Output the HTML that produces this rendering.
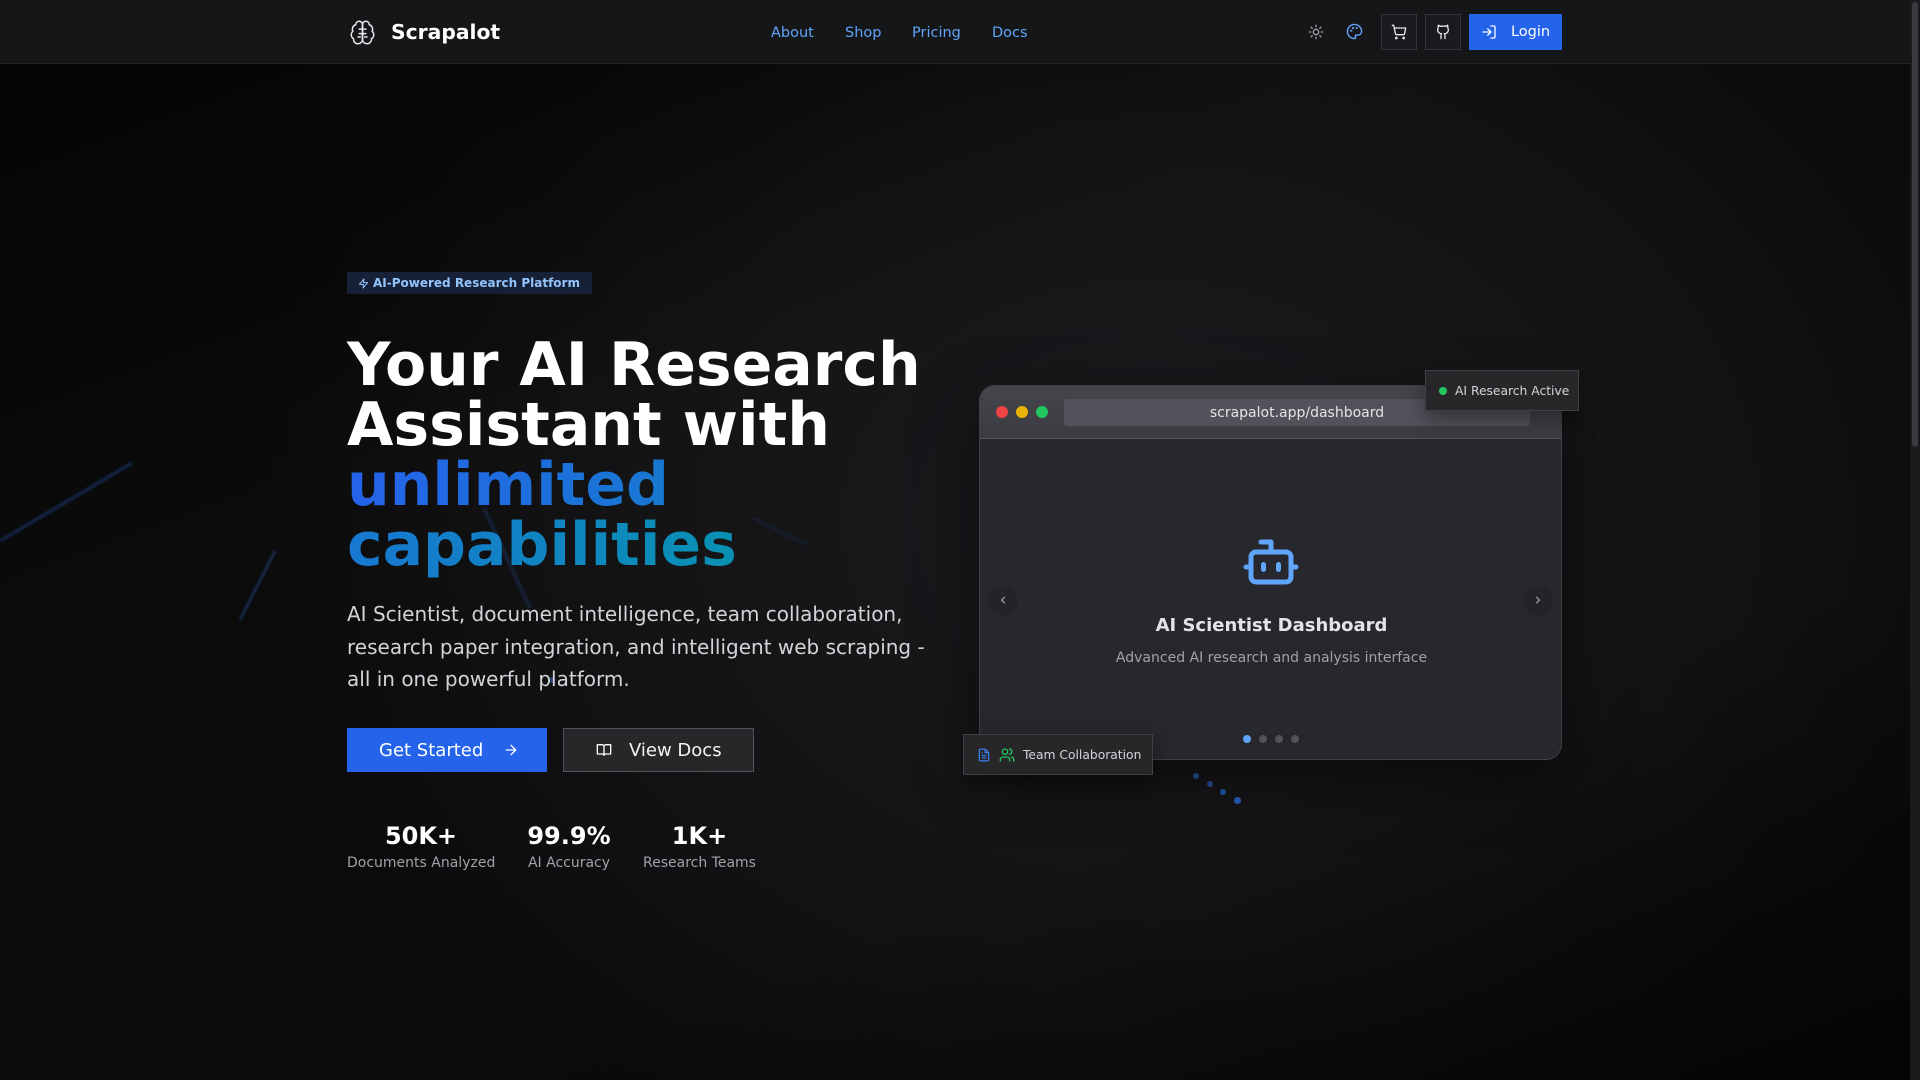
<!DOCTYPE html>
<html><head><meta charset="utf-8">
<style>
*{margin:0;padding:0;box-sizing:border-box}
html,body{width:1920px;height:1080px;overflow:hidden}
body{font-family:"DejaVu Sans","Liberation Sans",sans-serif;color:#fff;position:relative;
background:radial-gradient(ellipse 900px 700px at 1150px 520px,#1b1b1f 0%,#141416 55%,#0b0b0c 100%);}
.bgtl{position:absolute;left:0;top:0;width:1910px;height:1080px;background:linear-gradient(160deg,rgba(0,0,0,.7) 0%,rgba(0,0,0,0) 35%,rgba(0,0,0,0) 70%,rgba(0,0,0,.6) 100%)}
.nav{position:absolute;left:0;top:0;width:1910px;height:64px;background:#151618;border-bottom:1px solid #232427}
.abs{position:absolute}
.navlink{position:absolute;top:25px;font-size:14.5px;color:#60a5fa}
.ibtn{position:absolute;top:14px;width:36px;height:36px;border:1px solid #34353a;background:#1a1b1e;display:flex;align-items:center;justify-content:center}
.scroll{position:absolute;left:1910px;top:0;width:10px;height:1080px;background:#1a1a1c}
.thumb{position:absolute;left:1912px;top:2px;width:6px;height:445px;background:#3a3b40;border-radius:3px}
h1{position:absolute;left:347px;top:335px;font-size:60px;line-height:60px;font-weight:bold;white-space:nowrap}
.grad{background:linear-gradient(90deg,#2563eb,#0891b2);-webkit-background-clip:text;background-clip:text;color:transparent}
.stat{position:absolute;top:820px;text-align:center;white-space:nowrap}
.stat b{display:block;font-size:24px;line-height:32px}
.stat span{display:block;font-size:14px;color:#a1a1aa;line-height:22px}
</style></head><body>
<div class="bgtl"></div>
<svg class="abs" style="left:0;top:0" width="1910" height="1080">
<defs><filter id="bl"><feGaussianBlur stdDeviation="1.2"/></filter></defs>
<g filter="url(#bl)">
<line x1="0" y1="541" x2="132" y2="463" stroke="#2b57b8" stroke-width="3" opacity=".4"/>
<line x1="240" y1="620" x2="275" y2="551" stroke="#3b6fd8" stroke-width="2" opacity=".45"/>
<line x1="484" y1="508" x2="530" y2="608" stroke="#2b4f9a" stroke-width="3" opacity=".35"/>
<line x1="753" y1="518" x2="808" y2="545" stroke="#24407a" stroke-width="2" opacity=".35"/>
</g>
<circle cx="552" cy="680" r="3" fill="#3b6fd8" opacity=".5"/>
</svg>
<div class="nav"></div>
<svg class="abs" style="left:349px;top:19px" width="27" height="27" viewBox="0 0 24 24" fill="none" stroke="#e5e7eb" stroke-width="1.3" stroke-linecap="round" stroke-linejoin="round"><path d="M12 5a3 3 0 1 0-5.997.125 4 4 0 0 0-2.526 5.77 4 4 0 0 0 .556 6.588A4 4 0 1 0 12 18Z"/><path d="M12 5a3 3 0 1 1 5.997.125 4 4 0 0 1 2.526 5.77 4 4 0 0 1-.556 6.588A4 4 0 1 1 12 18Z"/><path d="M12 5v13M9 13h6M9 9h2M13 9h2M8 16h2M14 16h2"/></svg>
<div class="abs" style="left:391px;top:18px;font-size:20.3px;font-weight:bold;line-height:28px">Scrapalot</div>
<div class="navlink" style="left:771px">About</div>
<div class="navlink" style="left:845px">Shop</div>
<div class="navlink" style="left:912px">Pricing</div>
<div class="navlink" style="left:992px">Docs</div>
<svg class="abs" style="left:1308px;top:24px" width="16" height="16" viewBox="0 0 24 24" fill="none" stroke="#a1a1aa" stroke-width="2" stroke-linecap="round"><circle cx="12" cy="12" r="4"/><path d="M12 2v2M12 20v2M4.9 4.9l1.4 1.4M17.7 17.7l1.4 1.4M2 12h2M20 12h2M6.3 17.7l-1.4 1.4M19.1 4.9l-1.4 1.4"/></svg>
<svg class="abs" style="left:1346px;top:23px" width="17" height="17" viewBox="0 0 24 24" fill="none" stroke="#60a5fa" stroke-width="2" stroke-linecap="round"><path d="M12 2a10 10 0 0 0 0 20c1.7 0 2-1.3 1.3-2.3-.8-1-.2-2.7 1.2-2.7H17a5 5 0 0 0 5-5c0-5.5-4.5-10-10-10z"/><circle cx="7.5" cy="11" r=".6"/><circle cx="10" cy="7" r=".6"/><circle cx="15" cy="7" r=".6"/></svg>
<div class="ibtn" style="left:1381px"><svg width="16" height="16" viewBox="0 0 24 24" fill="none" stroke="#e5e7eb" stroke-width="2" stroke-linecap="round" stroke-linejoin="round"><circle cx="8" cy="21" r="1"/><circle cx="19" cy="21" r="1"/><path d="M2 2h2l2.7 12.4a2 2 0 0 0 2 1.6h9.7a2 2 0 0 0 2-1.6L22 6H5.1"/></svg></div>
<div class="ibtn" style="left:1425px"><svg width="16" height="16" viewBox="0 0 24 24" fill="none" stroke="#e5e7eb" stroke-width="2" stroke-linecap="round" stroke-linejoin="round"><path d="M15 22v-4a4.8 4.8 0 0 0-1-3.5c3 0 6-2 6-5.5.1-1.3-.3-2.5-1-3.5.3-1.2.3-2.4 0-3.5 0 0-1 0-3 1.5-2.6-.5-5.4-.5-8 0C6 2 5 2 5 2c-.3 1.1-.3 2.3 0 3.5A5.4 5.4 0 0 0 4 9c0 3.5 3 5.5 6 5.5-.4.5-.7 1.1-.8 1.7-.2.6-.3 1.2-.2 1.8v4"/></svg></div>
<div class="abs" style="left:1469px;top:14px;width:93px;height:36px;background:#2563eb;display:flex;align-items:center;justify-content:center;gap:14px;font-size:14.5px">
<svg width="16" height="16" viewBox="0 0 24 24" fill="none" stroke="#fff" stroke-width="2" stroke-linecap="round" stroke-linejoin="round"><path d="M15 3h4a2 2 0 0 1 2 2v14a2 2 0 0 1-2 2h-4M10 17l5-5-5-5M15 12H3"/></svg>Login</div>

<div class="abs" style="left:347px;top:272px;width:245px;height:22px;background:#162036;display:flex;align-items:center;padding-left:11px;gap:4px;font-size:12px;font-weight:bold;color:#93c5fd">
<svg width="11" height="11" viewBox="0 0 24 24" fill="none" stroke="#93c5fd" stroke-width="2.2" stroke-linejoin="round"><path d="M13 2 3 14h9l-1 8 10-12h-9l1-8z"/></svg>AI-Powered Research Platform</div>
<h1>Your AI Research<br>Assistant with<br><span class="grad">unlimited<br>capabilities</span></h1>
<div class="abs" style="left:347px;top:598px;width:600px;font-size:20px;line-height:32.5px;color:#d4d4d8">AI Scientist, document intelligence, team collaboration, research paper integration, and intelligent web scraping - all in one powerful platform.</div>
<div class="abs" style="left:347px;top:728px;width:200px;height:44px;background:#2563eb;display:flex;align-items:center;padding-left:32px;gap:20px;font-size:18px">Get Started <svg width="16" height="16" viewBox="0 0 24 24" fill="none" stroke="#fff" stroke-width="2" stroke-linecap="round" stroke-linejoin="round"><path d="M5 12h14M12 5l7 7-7 7"/></svg></div>
<div class="abs" style="left:563px;top:728px;width:191px;height:44px;background:#27272a;border:1px solid #52525b;display:flex;align-items:center;padding-left:32px;gap:17px;font-size:18px;color:#f4f4f5"><svg width="16" height="16" viewBox="0 0 24 24" fill="none" stroke="#fff" stroke-width="2" stroke-linejoin="round"><path d="M2 4h7a3 3 0 0 1 3 3v13a2 2 0 0 0-2-2H2zM22 4h-7a3 3 0 0 0-3 3v13a2 2 0 0 1 2-2h8z"/></svg>View Docs</div>
<div class="stat" style="left:347px;width:148px"><b>50K+</b><span>Documents Analyzed</span></div>
<div class="stat" style="left:527px;width:84px"><b>99.9%</b><span>AI Accuracy</span></div>
<div class="stat" style="left:643px;width:113px"><b>1K+</b><span>Research Teams</span></div>

<div class="abs" style="left:979px;top:385px;width:583px;height:375px;border:1px solid #3f3f46;border-radius:16px;background:#27282d;overflow:hidden;box-shadow:0 20px 60px rgba(0,0,0,.5)">
<div style="height:53px;background:linear-gradient(180deg,#45454c,#3b3b41);border-bottom:1px solid #52525b;position:relative">
<div class="abs" style="left:16px;top:20px;width:12px;height:12px;border-radius:6px;background:#ef4444"></div>
<div class="abs" style="left:36px;top:20px;width:12px;height:12px;border-radius:6px;background:#eab308"></div>
<div class="abs" style="left:56px;top:20px;width:12px;height:12px;border-radius:6px;background:#22c55e"></div>
<div class="abs" style="left:84px;top:13px;width:466px;height:27px;background:#52525b;border-radius:3px;text-align:center;font-size:14px;line-height:28px;color:#e4e4e7">scrapalot.app/dashboard</div>
</div>
<div class="abs" style="left:8px;top:200px;width:30px;height:30px;border-radius:15px;background:#232428;text-align:center;line-height:28px;color:#a1a1aa;font-size:17px">‹</div>
<div class="abs" style="left:543px;top:200px;width:30px;height:30px;border-radius:15px;background:#232428;text-align:center;line-height:28px;color:#a1a1aa;font-size:17px">›</div>
<svg class="abs" style="left:261px;top:146px" width="60" height="60" viewBox="0 0 24 24" fill="none" stroke="#60a5fa" stroke-width="2" stroke-linecap="round" stroke-linejoin="round"><path d="M12 8V4H8"/><rect x="4" y="8" width="16" height="12" rx="2"/><path d="M2 14h2M20 14h2M15 13v2M9 13v2"/></svg>
<div class="abs" style="left:0;top:229px;width:583px;text-align:center;font-size:18px;font-weight:bold;color:#e4e4e7">AI Scientist Dashboard</div>
<div class="abs" style="left:0;top:264px;width:583px;text-align:center;font-size:14px;color:#a1a1aa">Advanced AI research and analysis interface</div>
<div class="abs" style="left:263px;top:349px;width:8px;height:8px;border-radius:4px;background:#60a5fa"></div>
<div class="abs" style="left:279px;top:349px;width:8px;height:8px;border-radius:4px;background:#52525b"></div>
<div class="abs" style="left:295px;top:349px;width:8px;height:8px;border-radius:4px;background:#52525b"></div>
<div class="abs" style="left:311px;top:349px;width:8px;height:8px;border-radius:4px;background:#52525b"></div>
</div>
<div class="abs" style="left:1425px;top:370px;width:154px;height:41px;background:#27272a;border:1px solid #3f3f46;display:flex;align-items:center;padding-left:13px;gap:8px;font-size:12.3px;color:#d4d4d8;box-shadow:0 8px 20px rgba(0,0,0,.4)"><span style="width:8px;height:8px;border-radius:4px;background:#22c55e"></span>AI Research Active</div>
<div class="abs" style="left:963px;top:734px;width:190px;height:41px;background:#27272a;border:1px solid #3f3f46;display:flex;align-items:center;padding-left:13px;gap:8px;font-size:12.3px;color:#d4d4d8;box-shadow:0 8px 20px rgba(0,0,0,.4)">
<svg width="14" height="16" viewBox="0 0 24 24" fill="none" stroke="#3b82f6" stroke-width="2" stroke-linejoin="round"><path d="M14 2H6a2 2 0 0 0-2 2v16a2 2 0 0 0 2 2h12a2 2 0 0 0 2-2V8z"/><path d="M14 2v6h6M16 13H8M16 17H8M10 9H8"/></svg>
<svg width="16" height="16" viewBox="0 0 24 24" fill="none" stroke="#22c55e" stroke-width="2" stroke-linecap="round"><path d="M16 21v-2a4 4 0 0 0-4-4H6a4 4 0 0 0-4 4v2"/><circle cx="9" cy="7" r="4"/><path d="M22 21v-2a4 4 0 0 0-3-3.9M16 3.1a4 4 0 0 1 0 7.8"/></svg>Team Collaboration</div>
<div class="abs" style="left:1193px;top:773px;width:6px;height:6px;border-radius:3px;background:#1e3a6e"></div>
<div class="abs" style="left:1207px;top:781px;width:6px;height:6px;border-radius:3px;background:#1e3a7a"></div>
<div class="abs" style="left:1220px;top:789px;width:6px;height:6px;border-radius:3px;background:#1f4690"></div>
<div class="abs" style="left:1234px;top:797px;width:7px;height:7px;border-radius:4px;background:#2553a8"></div>
<div class="scroll"></div><div class="thumb"></div>
</body></html>
